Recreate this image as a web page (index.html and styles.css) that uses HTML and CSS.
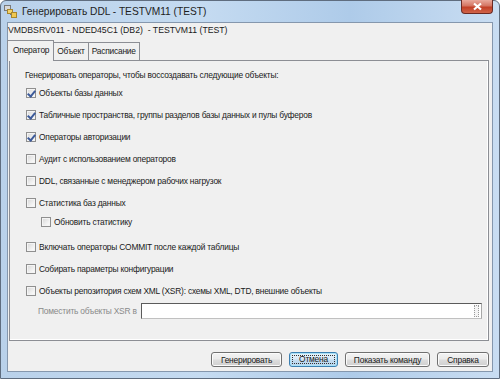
FILE: index.html
```html
<!DOCTYPE html>
<html lang="ru">
<head>
    <meta charset="UTF-8">
    <title>Генерировать DDL</title>
    <link rel="stylesheet" href="styles.css">
</head>
<body>
    <div class="window">
        <div class="titlebar">
            <svg class="app-icon" width="13" height="13" viewBox="0 0 13 13">
                <rect x="0.5" y="0.5" width="6" height="5" fill="#d8d8d8" stroke="#7a7a7a"/>
                <rect x="3.5" y="4.5" width="5" height="4" fill="#f4d36a" stroke="#a8862c"/>
                <rect x="7.5" y="7.5" width="5" height="5" fill="#f0c850" stroke="#a8862c"/>
                <path d="M6 9.5H7.5" stroke="#777"/>
            </svg>
            <span class="title">Генерировать DDL - TESTVM11 (TEST)</span>
            <div class="close-btn">
                <svg width="11" height="9" viewBox="0 0 11 9">
                    <path d="M2 1.5L9 7.5M9 1.5L2 7.5" stroke="#fff" stroke-width="2.2"/>
                </svg>
            </div>
        </div>

        <div class="client">
            <div class="conn">VMDBSRV011 - NDED45C1 (DB2)&nbsp; - TESTVM11 (TEST)</div>

            <div class="tabs">
                <div class="tab active">Оператор</div>
                <div class="tab">Объект</div>
                <div class="tab">Расписание</div>
            </div>

            <div class="panel">
                <div class="intro">Генерировать операторы, чтобы воссоздавать следующие объекты:</div>

                <label class="row first"><span class="cb checked"></span>Объекты базы данных</label>
                <label class="row"><span class="cb checked"></span>Табличные пространства, группы разделов базы данных и пулы буферов</label>
                <label class="row"><span class="cb checked"></span>Операторы авторизации</label>
                <label class="row"><span class="cb"></span>Аудит с использованием операторов</label>
                <label class="row"><span class="cb"></span>DDL, связанные с менеджером рабочих нагрузок</label>
                <label class="row"><span class="cb"></span>Статистика баз данных</label>
                <label class="row sub"><span class="cb"></span>Обновить статистику</label>
                <label class="row after-sub"><span class="cb"></span>Включать операторы COMMIT после каждой таблицы</label>
                <label class="row"><span class="cb"></span>Собирать параметры конфигурации</label>
                <label class="row"><span class="cb"></span>Объекты репозитория схем XML (XSR): схемы XML, DTD, внешние объекты</label>

                <div class="xsr">
                    <span class="xsr-label">Поместить объекты XSR в</span>
                    <div class="xsr-input"><span class="grip"></span></div>
                </div>
            </div>

            <div class="buttons">
                <button class="btn btn-gen">Генерировать</button>
                <button class="btn btn-cancel"><span>Отмена</span></button>
                <button class="btn btn-cmd">Показать команду</button>
                <button class="btn btn-help">Справка</button>
            </div>
        </div>
    </div>

    <script>
        // чекбоксы можно переключать
        document.querySelectorAll('.row').forEach(row => {
            row.addEventListener('click', () => {
                row.querySelector('.cb').classList.toggle('checked')
            })
        })
    </script>
</body>
</html>
```

FILE: styles.css
```css
html, body {
    margin: 0;
    padding: 0;
    background: #fff;
    font-family: "Liberation Sans", Arial, sans-serif;
}
.window {
    width: 500px;
    height: 379px;
    box-sizing: border-box;
    border: 1px solid #5f6d7f;
    border-radius: 6px 6px 0 0;
    background: linear-gradient(90deg, #b9d1ea 0%, #c5dbf1 40%, #aecbe9 70%, #c9ddf2 100%);
    display: flex;
    flex-direction: column;
}
.titlebar {
    height: 21px;
    display: flex;
    align-items: center;
    position: relative;
}
.app-icon {
    margin: 0 5px 0 3px;
}
.title {
    font-size: 10.2px;
    color: #1e1e1e;
    margin-top: -1px;
}
.close-btn {
    position: absolute;
    right: 6px;
    top: -1px;
    width: 32px;
    height: 14px;
    box-sizing: border-box;
    border: 1px solid #6b2a24;
    border-top: none;
    border-radius: 0 0 4px 4px;
    background: linear-gradient(#e9a99c 0%, #d47462 45%, #c23f26 55%, #d0654a 100%);
    display: flex;
    align-items: center;
    justify-content: center;
}
.client {
    margin: 0 6px 6px 6px;
    flex: 1;
    background: #f0f0f0;
    border: 1px solid #8597ad;
    display: flex;
    flex-direction: column;
    font-size: 8.4px;
    letter-spacing: -0.2px;
    color: #1a1a1a;
}
.conn {
    margin-top: 2px;
    line-height: 10px;
    height: 10px;
    font-size: 8.7px;
    letter-spacing: 0;
}
.tabs {
    display: flex;
    margin-top: 5px;
    height: 20px;
    position: relative;
    z-index: 1;
}
.tab {
    margin-top: 2px;
    height: 18px;
    box-sizing: border-box;
    border: 1px solid #8c8e94;
    border-bottom: none;
    border-left: none;
    padding: 0 3px 0 3px;
    line-height: 17px;
    background: #f0f0f0;
}
.tab.active {
    margin-top: 0;
    height: 21px;
    border-left: 1px solid #8c8e94;
    padding: 0 4px 0 5px;
    line-height: 19px;
    margin-left: -1px;
}
.panel {
    margin: 0 3px 0 1px;
    height: 281px;
    box-sizing: border-box;
    border: 1px solid #8c8e94;
    box-shadow: inset -1px -1px 0 #fff;
    display: flex;
    flex-direction: column;
}
.intro {
    margin: 8px 0 0 15px;
    line-height: 12px;
}
.row {
    display: flex;
    align-items: center;
    height: 22px;
    padding-left: 16px;
    cursor: default;
}
.row.first {
    margin-top: 1px;
}
.row.sub {
    height: 16px;
    padding-left: 31px;
}
.row.after-sub {
    margin-top: 6px;
}
.cb {
    width: 10px;
    height: 10px;
    box-sizing: border-box;
    border: 1px solid #8f8f8f;
    background: linear-gradient(135deg, #d6d6d6 0%, #f4f4f4 70%, #fdfdfd 100%);
    box-shadow: inset 0 0 0 1px #f4f4f4;
    margin-right: 3px;
    position: relative;
}
.cb.checked::after {
    content: "";
    position: absolute;
    left: 2px;
    top: 0;
    width: 3px;
    height: 6px;
    border: solid #3d5b9a;
    border-width: 0 2px 2px 0;
    transform: rotate(40deg);
}
.xsr {
    display: flex;
    align-items: center;
    height: 18px;
    padding-left: 28px;
}
.xsr-label {
    color: #8a8a8a;
    white-space: nowrap;
    margin-right: 4px;
}
.xsr-input {
    flex: 1;
    margin-right: 6px;
    height: 16px;
    box-sizing: border-box;
    border: 1px solid #5b5b5b;
    border-right-color: #a8a8a8;
    border-bottom-color: #c0c0c0;
    background: #fff;
    position: relative;
}
.grip {
    position: absolute;
    right: 2px;
    top: 1px;
    width: 5px;
    height: 12px;
    border: 1px dotted #9a9a9a;
    box-sizing: border-box;
    background: #f4f4f4;
}
.buttons {
    display: flex;
    justify-content: flex-end;
    gap: 7px;
    margin-top: 11px;
    padding-right: 3px;
}
.btn {
    height: 15px;
    padding: 0;
    font-family: inherit;
    font-size: 8.4px;
    letter-spacing: -0.2px;
    color: #1a1a1a;
    border: 1px solid #707070;
    border-radius: 3px;
    background: linear-gradient(#f3f3f3 0%, #ebebeb 48%, #dddddd 52%, #cfcfcf 100%);
    box-shadow: inset 0 0 0 1px #fbfbfb;
}
.btn-gen { width: 71px; }
.btn-cancel {
    width: 49px;
    border-color: #3c7fb1;
    background: linear-gradient(#e6f1f9 0%, #d9e9f6 48%, #c4ddf1 52%, #b6d3ec 100%);
    box-shadow: inset 0 0 0 1px #a9e2f8;
    padding: 2px;
}
.btn-cancel span {
    display: block;
    height: 100%;
    box-sizing: border-box;
    border: 1px dotted #333;
    line-height: 7px;
}
.btn-cmd { width: 85px; }
.btn-help { width: 52px; }
```
